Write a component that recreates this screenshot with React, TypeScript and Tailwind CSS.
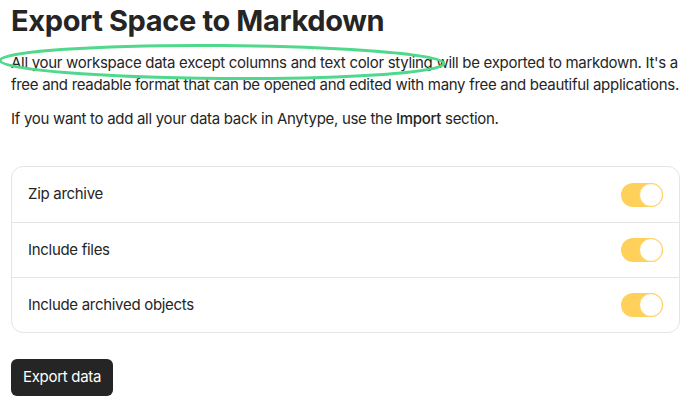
import React, { useState } from "react";

const options = ["Zip archive", "Include files", "Include archived objects"];

const Toggle = ({ on, onClick }: { on: boolean; onClick: () => void }) => (
  <button
    onClick={onClick}
    className={`relative h-6 w-[42px] rounded-full ${on ? "bg-[#ffd15b]" : "bg-[#e3e3e3]"}`}
  >
    <span
      className={`absolute top-0 h-6 w-6 rounded-full border-[1.5px] bg-white ${
        on ? "right-0 border-[#ffd15b]" : "left-0 border-[#e3e3e3]"
      }`}
    />
  </button>
);

export default function App() {
  const [values, setValues] = useState([true, true, true]);

  return (
    <div className="relative h-[407px] w-[690px] overflow-hidden bg-white pl-[11px] pr-[8px] font-['Inter',sans-serif] text-[#252525]">
      <h1 className="pt-[1px] text-[29px] font-bold leading-[40px] tracking-[-0.35px]">
        Export Space to Markdown
      </h1>
      <p className="mt-[11px] whitespace-nowrap text-[15px] leading-[22px] tracking-[-0.3px]">
        All your workspace data except columns and text color styling will be exported to markdown. It's a
        <br />
        free and readable format that can be opened and edited with many free and beautiful applications.
      </p>
      <p className="mt-[12px] text-[15px] leading-[22px] tracking-[-0.3px]">
        If you want to add all your data back in Anytype, use the <span className="font-medium">Import</span> section.
      </p>

      <div className="mr-[2px] mt-[36px] rounded-xl border border-[#e5e5e5]">
        {options.map((label, i) => (
          <div
            key={label}
            className={`flex h-[55px] items-center justify-between pl-4 pr-4 ${i > 0 ? "border-t border-[#e5e5e5]" : ""}`}
          >
            <span className="text-[15px] tracking-[-0.3px]">{label}</span>
            <Toggle on={values[i]} onClick={() => setValues(values.map((v, j) => (j === i ? !v : v)))} />
          </div>
        ))}
      </div>

      <button className="mt-[26px] h-[37px] rounded-md bg-[#252525] px-3 text-[15px] tracking-[-0.3px] text-white">
        Export data
      </button>

      {/* hand-drawn highlight around the first sentence */}
      <svg className="pointer-events-none absolute left-0 top-0" width="690" height="407">
        <ellipse
          cx="222"
          cy="62"
          rx="222"
          ry="16.5"
          transform="rotate(0.4 222 62)"
          fill="none"
          stroke="#50d88c"
          strokeWidth="3"
        />
      </svg>
    </div>
  );
}
